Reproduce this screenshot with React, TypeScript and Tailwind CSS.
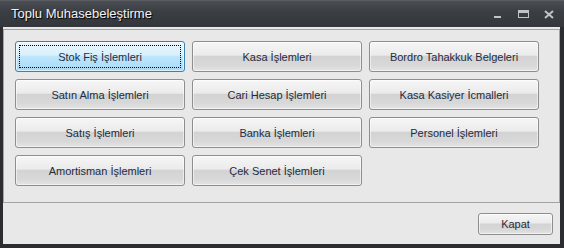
import React from "react";

const buttons = [
  "Stok Fiş İşlemleri",
  "Kasa İşlemleri",
  "Bordro Tahakkuk Belgeleri",
  "Satın Alma İşlemleri",
  "Cari Hesap İşlemleri",
  "Kasa Kasiyer İcmalleri",
  "Satış İşlemleri",
  "Banka İşlemleri",
  "Personel İşlemleri",
  "Amortisman İşlemleri",
  "Çek Senet İşlemleri",
];

const skinBtn =
  "border border-[#8d8e90] rounded-[3px] bg-[linear-gradient(to_bottom,#f6f6f6_0%,#ebebeb_45%,#d3d3d3_50%,#d8d8d8_80%,#e4e4e4_100%)] shadow-[inset_0_0_0_1px_rgba(255,255,255,0.55)]";

const focusedBtn =
  "border border-[#3c7fb1] rounded-[3px] bg-[linear-gradient(to_bottom,#eaf6fd_0%,#d9f0fc_45%,#bee6fd_50%,#a7d9f5_100%)] shadow-[inset_0_0_0_1px_rgba(255,255,255,0.6)]";

const App = () => {
  return (
    <div
      className="w-[564px] h-[248px] bg-[#2b2d31] flex flex-col overflow-hidden"
      style={{ fontFamily: "Tahoma, 'DejaVu Sans', 'Liberation Sans', sans-serif" }}
    >
      {/* title bar */}
      <div className="h-[27px] flex items-center bg-[linear-gradient(to_bottom,#4a4d53_0%,#3b3e43_40%,#33363b_100%)] border-t border-[#5a5d62]">
        <span className="ml-[11px] text-[13px] text-[#f2f2f2] [text-shadow:1px_1px_1px_#000] font-['Liberation_Sans',sans-serif]">
          Toplu Muhasebeleştirme
        </span>
        <div className="ml-auto flex items-center gap-[15px] mr-[10px] mt-[1px]">
          <svg width="10" height="10" viewBox="0 0 10 10">
            <rect x="1" y="6" width="7" height="2" fill="#bfc4cb" />
          </svg>
          <svg width="11" height="9" viewBox="0 0 11 9">
            <rect x="0.5" y="0.5" width="10" height="7" fill="none" stroke="#bfc4cb" />
            <rect x="0" y="0" width="11" height="3" fill="#bfc4cb" />
          </svg>
          <svg width="10" height="9" viewBox="0 0 10 9">
            <path d="M1 1 L9 8 M9 1 L1 8" stroke="#bfc4cb" strokeWidth="2" />
          </svg>
        </div>
      </div>

      {/* body */}
      <div className="ml-[3px] mr-[4px] mb-[4px] flex-1 bg-[#e8e8e8] flex flex-col">
        <div className="mt-[2px] border border-[#a3a3a3] h-[174px] pt-[11px] pl-[11px]">
          <div className="grid grid-cols-[170px_170px_170px] auto-rows-[31px] gap-[7px] font-['Liberation_Sans',sans-serif]">
            {buttons.map((b, i) => (
              <div
                key={b}
                className={`${i === 0 ? focusedBtn : skinBtn} flex items-center justify-center text-[11px] text-[#1f2c3f] relative`}
              >
                {i === 0 && (
                  <div className="absolute inset-[3px] border border-dotted border-black" />
                )}
                <span className="mt-[1px]">{b}</span>
              </div>
            ))}
          </div>
        </div>
        <div className="flex justify-end mt-[10px] mr-[7px]">
          <div
            className={`${skinBtn} w-[75px] h-[22px] flex items-center justify-center text-[11px] text-[#1f2c3f] font-['Liberation_Sans',sans-serif]`}
          >
            Kapat
          </div>
        </div>
      </div>
    </div>
  );
};

export default App;
